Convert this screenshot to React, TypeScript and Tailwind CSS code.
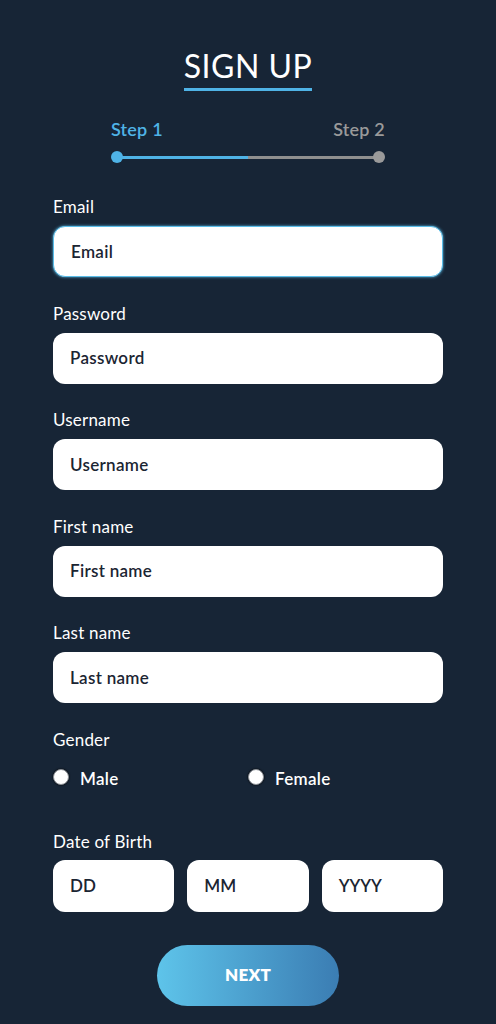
import React from "react";

const font = { fontFamily: "Lato, 'Open Sans', sans-serif" };

function Field({ label, placeholder, focused }: { label: string; placeholder: string; focused?: boolean }) {
  return (
    <div className="flex flex-col">
      <div className="text-[17px] leading-[20px] text-white font-normal tracking-[0.2px]">{label}</div>
      <div
        className={`mt-[9px] h-[51px] rounded-[12px] bg-white flex items-center pl-[17px] ${
          focused ? "border-[1.5px] border-[#5bbde8] shadow-[0_0_3px_#5bbde8]" : ""
        }`}
      >
        <span className="text-[17px] text-[#1b2532] font-semibold tracking-[0.3px]">{placeholder}</span>
      </div>
    </div>
  );
}

function Radio({ label }: { label: string }) {
  return (
    <div className="flex items-center">
      <span className="w-[16px] h-[16px] rounded-full bg-white border border-[#8a8f96] shadow-[0_0_2px_#000]" />
      <span className="ml-[11px] text-[17px] font-semibold text-white mt-[3px] tracking-[0.3px]">{label}</span>
    </div>
  );
}

export default function App() {
  return (
    <div style={font} className="w-[496px] h-[1024px] bg-[#172536] overflow-hidden">
      <div className="flex flex-col items-center pt-[48px]">
        <div className="text-[32px] leading-[36px] text-white tracking-[0.5px] border-b-[3px] border-[#4fb3e6] pb-[4px]">
          SIGN UP
        </div>
      </div>
      <div className="mx-auto w-[274px] mt-[27px]">
        <div className="flex justify-between text-[18px] leading-[22px] font-semibold tracking-[0.2px]">
          <span className="text-[#4fb3e6]">Step 1</span>
          <span className="text-[#9a9a9a]">Step 2</span>
        </div>
        <div className="relative mt-[11px] h-[12px] flex items-center">
          <div className="absolute left-[6px] right-[6px] top-[5px] h-[3px] flex">
            <div className="flex-1 bg-[#4fb3e6]" />
            <div className="flex-1 bg-[#8f8f8f]" />
          </div>
          <div className="relative w-[12px] h-[12px] rounded-full bg-[#4fb3e6]" />
          <div className="flex-1" />
          <div className="relative w-[12px] h-[12px] rounded-full bg-[#9a9a9a]" />
        </div>
      </div>
      <div className="px-[53px] mt-[34px] flex flex-col gap-[26.5px]">
        <Field label="Email" placeholder="Email" focused />
        <Field label="Password" placeholder="Password" />
        <Field label="Username" placeholder="Username" />
        <Field label="First name" placeholder="First name" />
        <Field label="Last name" placeholder="Last name" />
        <div className="flex flex-col">
          <div className="text-[17px] leading-[20px] text-white font-normal tracking-[0.2px]">Gender</div>
          <div className="mt-[13px] flex">
            <div className="w-[195px]">
              <Radio label="Male" />
            </div>
            <Radio label="Female" />
          </div>
        </div>
        <div className="flex flex-col mt-[14px]">
          <div className="text-[17px] leading-[20px] text-white font-normal tracking-[0.2px]">Date of Birth</div>
          <div className="mt-[8px] grid grid-cols-3 gap-[13px]">
            {["DD", "MM", "YYYY"].map((t) => (
              <div key={t} className="h-[52px] rounded-[12px] bg-white flex items-center pl-[17px]">
                <span className="text-[17px] text-[#1b2532] font-semibold">{t}</span>
              </div>
            ))}
          </div>
        </div>
      </div>
      <div className="flex justify-center mt-[33px]">
        <button className="w-[182px] h-[61px] rounded-full bg-gradient-to-r from-[#5ec4ea] to-[#3b7db3] text-white text-[17px] font-extrabold tracking-[0.3px]">
          NEXT
        </button>
      </div>
    </div>
  );
}
